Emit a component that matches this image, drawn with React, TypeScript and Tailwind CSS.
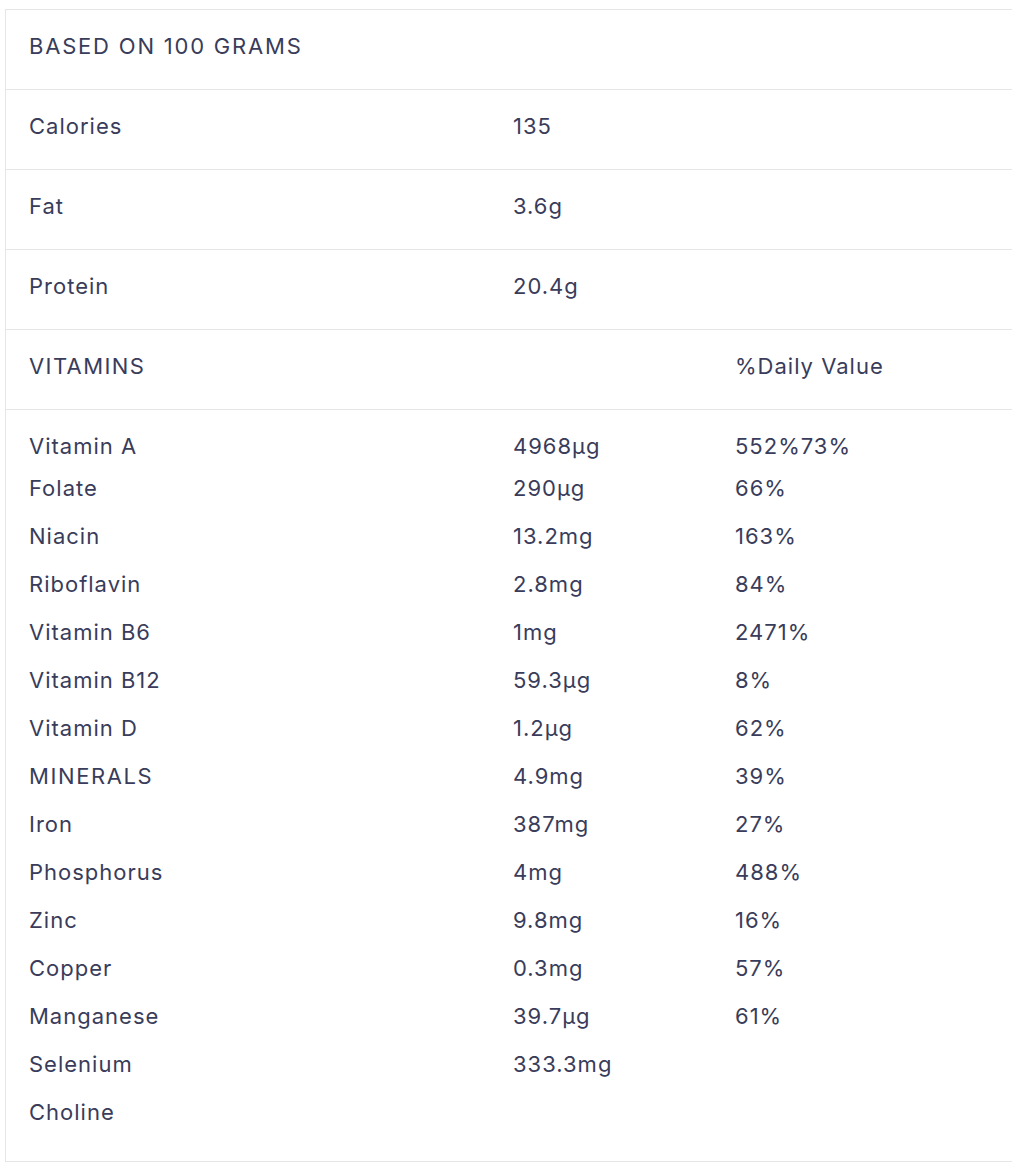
import React from "react";

const rows: [string, string, string][] = [
  ["Folate", "290µg", "66%"],
  ["Niacin", "13.2mg", "163%"],
  ["Riboflavin", "2.8mg", "84%"],
  ["Vitamin B6", "1mg", "2471%"],
  ["Vitamin B12", "59.3µg", "8%"],
  ["Vitamin D", "1.2µg", "62%"],
  ["MINERALS", "4.9mg", "39%"],
  ["Iron", "387mg", "27%"],
  ["Phosphorus", "4mg", "488%"],
  ["Zinc", "9.8mg", "16%"],
  ["Copper", "0.3mg", "57%"],
  ["Manganese", "39.7µg", "61%"],
  ["Selenium", "333.3mg", ""],
  ["Choline", "", ""],
];

function Row({ a, b, c, caps }: { a: string; b?: string; c?: string; caps?: string }) {
  return (
    <div className="grid h-[80px] grid-cols-[484px_222px_1fr] items-center border-b border-[#e6e6e6] pb-[6px]">
      <div className={"pl-[23px] " + (caps ?? "")}>{a}</div>
      <div className="pl-[23px]">{b}</div>
      <div className="pl-[23px]">{c}</div>
    </div>
  );
}

export default function App() {
  return (
    <div
      className="min-h-[1176px] w-[1012px] overflow-hidden bg-white pl-[5px] pt-[9px] text-[22px] tracking-[1px] text-[#393c5a]"
      style={{ fontFamily: "Inter, 'Liberation Sans', sans-serif" }}
    >
      <div className="w-[1100px] border border-[#e6e6e6]">
        <Row a="BASED ON 100 GRAMS" caps="tracking-[1.8px]" />
        <Row a="Calories" b="135" />
        <Row a="Fat" b="3.6g" />
        <Row a="Protein" b="20.4g" />
        <Row a="VITAMINS" c="%Daily Value" caps="tracking-[1.4px]" />
        <div className="pb-[25px] pt-[12px]">
          <div className="grid h-[42px] grid-cols-[484px_222px_1fr] items-center pt-[6px]">
            <div className="pl-[23px]">Vitamin A</div>
            <div className="pl-[23px]">4968µg</div>
            <div className="pl-[23px]">552%73%</div>
          </div>
          {rows.map(([a, b, c]) => (
            <div key={a} className="grid h-[48px] grid-cols-[484px_222px_1fr] items-center">
              <div className={a === "MINERALS" ? "pl-[23px] tracking-[1.6px]" : "pl-[23px]"}>{a}</div>
              <div className="pl-[23px]">{b}</div>
              <div className="pl-[23px]">{c}</div>
            </div>
          ))}
        </div>
      </div>
    </div>
  );
}
